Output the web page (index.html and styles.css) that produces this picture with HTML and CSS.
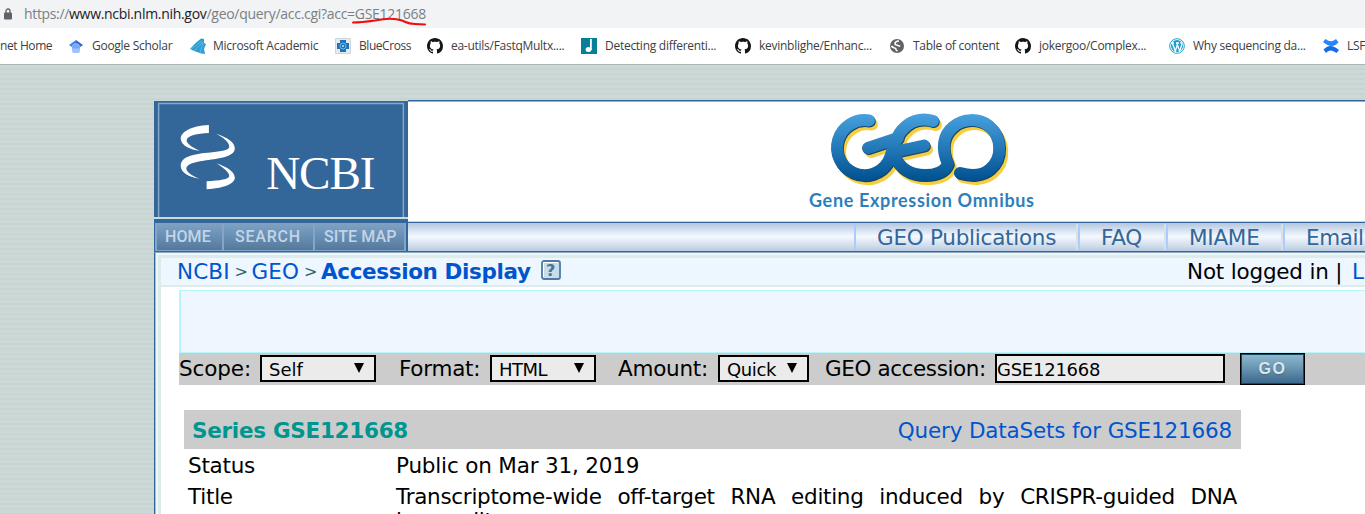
FILE: index.html
```
<!DOCTYPE html>
<html lang="en">
<head>
<meta charset="utf-8">
<title>GEO Accession viewer</title>
<link rel="stylesheet" href="styles.css">
</head>
<body>
<svg class="defs" width="0" height="0">
  <symbol id="github" viewBox="0 0 16 16"><path fill="#14171a" d="M8 0C3.58 0 0 3.58 0 8c0 3.54 2.29 6.53 5.47 7.59.4.07.55-.17.55-.38 0-.19-.01-.82-.01-1.49-2.01.37-2.53-.49-2.69-.94-.09-.23-.48-.94-.82-1.13-.28-.15-.68-.52-.01-.53.63-.01 1.08.58 1.23.82.72 1.21 1.87.87 2.33.66.07-.52.28-.87.51-1.07-1.78-.2-3.64-.89-3.64-3.95 0-.87.31-1.59.82-2.15-.08-.2-.36-1.02.08-2.12 0 0 .67-.21 2.2.82.64-.18 1.32-.27 2-.27s1.36.09 2 .27c1.53-1.04 2.2-.82 2.2-.82.44 1.1.16 1.92.08 2.12.51.56.82 1.27.82 2.15 0 3.07-1.87 3.75-3.65 3.95.29.25.54.73.54 1.48 0 1.07-.01 1.93-.01 2.2 0 .21.15.46.55.38A8.01 8.01 0 0 0 16 8c0-4.42-3.58-8-8-8z"/></symbol>
</svg>
<div class="address">
  <svg class="lock" width="8" height="12" viewBox="0 0 8 12"><path fill="none" stroke="#5f6368" stroke-width="1.3" d="M2 5V3a2 2 0 0 1 4 0v2"/><rect y="4.5" width="8" height="7" rx="1" fill="#5f6368"/></svg>
  <span class="url"><span>https://</span><span class="host">www.ncbi.nlm.nih.gov</span><span class="path">/geo/query/acc.cgi?acc=GSE121668</span></span>
  <svg class="scribble" width="78" height="10" viewBox="0 0 78 10"><path fill="none" stroke="#f00d10" stroke-width="2" stroke-linecap="round" d="M2 5.500C10 5.500 17 4.500 24 3.500C34 1.500 45 1.500 51 3.500C55 5 56 7 64 7L74 7.500"/></svg>
</div>
<div class="bookmarks">
  <a class="bm b0"><span>net Home</span></a>
  <a class="bm b1"><svg width="14" height="14" viewBox="0 0 14 14"><path fill="#4285f4" d="M7 1 0 6l7 5z"/><path fill="#356ac3" d="M7 1l7 5-7 5z"/><path fill="#a0c3ff" d="M3 7a4.3 4.3 0 0 1 8 0v4a4 4 0 0 1-8 0z"/><path fill="#76a7fa" d="M3 8a4.3 4.3 0 0 1 8 0v1.5H3z"/></svg><span>Google Scholar</span></a>
  <a class="bm b2"><svg width="16" height="16" viewBox="0 0 16 16"><path fill="#2d9fd4" d="M0 11 5 5.500 11 0.500l3 .5v4l2 1-2 5 1 5-4-.5L4 13z"/><path stroke="#8fd0ee" stroke-width=".5" fill="none" d="M1 11 12 3M4 13 13 4M10 15 13 5"/></svg><span>Microsoft Academic</span></a>
  <a class="bm b3"><svg width="16" height="16" viewBox="0 0 16 16"><path fill="#e7eaed" stroke="#cfd5da" d="M.5.5h15v15H.5z"/><path fill="#1774bd" d="M5 2h6v3h3v6h-3v3H5v-3H2V5h3z"/><circle cx="8" cy="8" r="3" fill="none" stroke="#8fc3e6" stroke-width=".8"/><circle cx="8" cy="8" r="1" fill="#c9e5f7"/></svg><span>BlueCross</span></a>
  <a class="bm b4"><svg width="16" height="16"><use href="#github"/></svg><span>ea-utils/FastqMultx....</span></a>
  <a class="bm b5"><svg width="16" height="16" viewBox="0 0 16 16"><path fill="#087f98" d="M0 0h16v16H0z"/><ellipse cx="7.500" cy="11.500" rx="2.900" ry="2.500" fill="#fff"/><path fill="#fff" d="M9 1h1.800v11H9z"/></svg><span>Detecting differenti...</span></a>
  <a class="bm b6"><svg width="16" height="16"><use href="#github"/></svg><span>kevinblighe/Enhanc...</span></a>
  <a class="bm b7"><svg width="14" height="14" viewBox="0 0 14 14"><circle cx="7" cy="7" r="7" fill="#5f6368"/><path fill="none" stroke="#fff" stroke-width="1.700" d="M9 2C6 2 5 3.500 5 5s4 1 5 2.500M1.500 7c1 2 3 1.500 4 2.500s0 2 2 2.500"/></svg><span>Table of content</span></a>
  <a class="bm b8"><svg width="16" height="16"><use href="#github"/></svg><span>jokergoo/Complex...</span></a>
  <a class="bm b9"><svg width="16" height="16" viewBox="0 0 16 16"><circle cx="8" cy="8" r="7.300" fill="#fff" stroke="#1e9fd0"/><circle cx="8" cy="8" r="6" fill="#1e9fd0"/><path fill="none" stroke="#fff" stroke-width="1.300" d="M2 5h3M7 5h3M3.300 5l3 8L8.300 7M7.700 5l3 8 2-6c.3-1-.9-2-1-3"/></svg><span>Why sequencing da...</span></a>
  <a class="bm b10"><svg width="16" height="14" viewBox="0 0 16 14"><path fill="#2684ff" d="M0 3 2.500 0c4 2.500 6 3.500 10.500 0l2.500 3.500C10 9 6 7.500 0 3z"/><path fill="#136bea" d="M16 11l-2.500 3C9 11 7 10.500 3 14L.5 10.500C6 5 10 6.500 16 11z"/></svg><span>LSF</span></a>
</div>
<div class="page">
  <div class="frame">
    <header class="header">
      <div class="ncbi">
        <svg class="ncbi-logo" width="254" height="118" viewBox="0 0 254 118">
          <path fill="#336699" d="M0 0h254v118H0z"/><path fill="none" stroke="#86a9c9" stroke-width="1.500" d="M2.500 118V2.500h249V118"/>
          <g fill="#fff" transform="translate(-15 -11) scale(.33333)">
            <path d="M206 106C150 108 120 128 120 148C120 168 150 182 178 185C150 172 138 162 138 152C140 140 170 132 206 131Z"/>
            <path d="M228 133C265 145 285 160 285 178C285 205 230 209 190 215C160 219 138 226 137 238C137 250 155 262 178 270C145 266 120 250 120 231C120 200 165 194 210 190C245 186 268 184 268 172C268 158 250 145 228 133Z"/>
            <path d="M228 223C265 235 285 250 285 268C285 285 250 300 199 302V278C240 276 268 272 268 262C268 250 250 236 228 223Z"/>
          </g>
          <text x="112" y="89.500" textLength="111" class="ncbi-word">NCBI</text>
        </svg>
        <nav class="ncbi-nav"><a class="n1">HOME</a><a class="n2">SEARCH</a><a class="n3">SITE MAP</a></nav>
      </div>
      <div class="banner">
        <div class="geo">
          <svg width="230" height="100" viewBox="805 110 230 100">
            <defs>
              <linearGradient id="gb" gradientUnits="userSpaceOnUse" x1="0" y1="114" x2="0" y2="181"><stop offset="0" stop-color="#48a0de"/><stop offset=".5" stop-color="#2479b8"/><stop offset="1" stop-color="#00508f"/></linearGradient>
              <g id="geo-shape" fill="none" stroke-width="12" stroke-linecap="round" stroke-linejoin="round">
                <path d="M869 120.500A27.500 27.500 0 1 0 888 162C894 150 894 139 902 130C909 122 920 117 933 121"/>
                <path d="M894 155C899 168 910 175 925 175C937 175 945 171 948 164C941 149 943 135 953 127C963 118 979 118 989 126C1002 137 1003 158 990 169C982 176 970 176 960 173"/>
                <path d="M868 148 898 138M899 151 924 145.500"/>
              </g>
            </defs>
            <use href="#geo-shape" stroke="#f7ce3d" x="3" y="4"/>
            <use href="#geo-shape" stroke="#174264" x=".8" y="1"/>
            <use href="#geo-shape" stroke="url(#gb)"/>
            <text x="809" y="206.500" textLength="225" class="geo-word">Gene Expression Omnibus</text>
          </svg>
        </div>
        <nav class="geo-nav"><a class="g1">GEO Publications</a><a class="g2">FAQ</a><a class="g3">MIAME</a><a class="g4">Email</a></nav>
      </div>
    </header>
    <main class="content">
      <div class="crumbs">
        <div class="trail"><a>NCBI</a><i>&gt;</i><a>GEO</a><i>&gt;</i><b>Accession Display</b>
          <svg class="help" width="20" height="20" viewBox="0 0 20 20"><rect x="1" y="1" width="18" height="18" rx="2" fill="#c9dcec" stroke="#4f7ba1" stroke-width="1.800"/><path fill="none" stroke="#fff" d="M2.500 17V2.500H17"/><text x="5" y="15.500" class="help-mark">?</text></svg>
        </div>
        <div class="login">Not logged in | <a>L</a></div>
      </div>
      <div class="notice"></div>
      <form class="query">
        <label class="q1">Scope:</label><span class="select s1">Self<em></em></span>
        <label class="q2">Format:</label><span class="select s2">HTML<em></em></span>
        <label class="q3">Amount:</label><span class="select s3">Quick<em></em></span>
        <label class="q4">GEO accession:</label><span class="field">GSE121668</span>
        <span class="go">GO</span>
      </form>
      <section class="record">
        <div class="series"><b>Series GSE121668</b><a>Query DataSets for GSE121668</a></div>
        <dl>
          <dt>Status</dt><dd>Public on Mar 31, 2019</dd>
          <dt>Title</dt><dd class="title">Transcriptome-wide off-target RNA editing induced by CRISPR-guided DNA <span class="tail">base editors</span></dd>
        </dl>
      </section>
    </main>
  </div>
</div>
</body>
</html>
```
FILE: styles.css
```
* { box-sizing: border-box; }
body { margin: 0; width: 1365px; height: 514px; overflow: hidden; background: #fff; color: #000; font: 21.5px/28px "DejaVu Sans", Verdana, sans-serif; letter-spacing: -.25px; }
.defs { display: none; }
a { color: #0055cc; }
svg { display: block; flex: none; }

.address { position: relative; height: 28px; padding-left: 4px; display: flex; align-items: center; gap: 12px; background: #f1f3f4; font: 14px/20px "Open Sans", "Noto Sans", sans-serif; letter-spacing: -.34px; color: #7b7f84; white-space: nowrap; }
.host { color: #202124; letter-spacing: -.3px; }
.path { letter-spacing: -.29px; }
.scribble { position: absolute; left: 351px; top: 17px; }

.bookmarks { height: 37px; padding-bottom: 1px; display: flex; align-items: center; background: #fff; border-bottom: 1px solid #aeb4b4; font: 12px/16px "Open Sans", "Noto Sans", sans-serif; letter-spacing: -.27px; overflow: hidden; }
.bm { flex: none; display: flex; align-items: center; gap: 8px; color: #3c4043; white-space: nowrap; }
.bm span { padding-top: 1px; }
.b0 { width: 69px; letter-spacing: -.4px; }
.b1 { width: 121px; gap: 9px; }
.b2 { width: 145px; gap: 7px; }
.b3 { width: 92px; letter-spacing: -.44px; }
.b4 { width: 154px; }
.b5 { width: 154px; }
.b6 { width: 155px; }
.b7 { width: 125px; gap: 9px; }
.b8 { width: 154px; }
.b9 { width: 154px; }

.page { height: 449px; padding: 35px 0 0 154px; background: repeating-linear-gradient(#ccd9d6 0 3px, #c8d4d1 3px 5px); overflow: hidden; }
.header { display: flex; height: 152px; }
.ncbi { width: 254px; margin-top: 1px; flex: none; background: #336699; }
.ncbi-logo { height: 116px; }
.ncbi-word { font: 48px "Liberation Serif", serif; fill: #fff; letter-spacing: 0; }
.ncbi-nav { height: 35px; border-top: 2px solid #ced9de; padding: 4px 2px 0 1px; display: flex; }
.ncbi-nav a { height: 28px; padding-left: 8px; font: 500 16px/28px Roboto, sans-serif; color: #c2d5e7; background: linear-gradient(#80a2c3, #688fb5 50%, #557999); border: solid #83a6c8; border-width: 0 0 1px 2px; white-space: pre; }
.n1 { width: 67px; letter-spacing: .1px; }
.ncbi-nav .n2 { width: 91px; padding-left: 11px; letter-spacing: .8px; }
.ncbi-nav .n3 { width: 93px; padding-left: 9px; border-right-width: 2px; letter-spacing: .1px; }
.banner { flex: 1; min-width: 0; background: #fff; border-top: 1px solid #336699; box-shadow: inset 0 1px #8aaed0; }
.geo { height: 120px; padding: 9px 0 0 397px; }
.geo-word { font: bold 18px Lato, sans-serif; fill: #2d7fbb; letter-spacing: 0; }
.geo-nav { height: 31px; display: flex; padding: 2px 0 0 446px; border-top: 1px solid #c7d1da; border-bottom: 1px solid #336699; background: linear-gradient(#336699 0 1px, #b4c7df 1px, #f4f9ff 50%, #bacce0); overflow: hidden; white-space: nowrap; }
.geo-nav a { height: 26px; flex: none; line-height: 27px; color: #336699; border-left: 2px solid #aaccff; padding-left: 21px; }
.g1 { width: 222px; }
.g2, .g3, .g4 { box-shadow: -2px 0 #dddfe4; }
.g2 { margin-left: 2px; width: 86px; }
.g3 { margin-left: 2px; width: 115px; }
.g4 { margin-left: 2px; width: 120px; letter-spacing: -.4px; }

.content { height: 270px; border-left: 1px solid #336699; border-top: 1px solid #8baaca; background: linear-gradient(90deg, #a2bdd4 0 1px, #f0f7f7 1px 3px, #deebeb 3px 6px, #fff 6px); }
.crumbs { height: 34px; margin-left: 3px; border-top: 2px solid #f0f7f7; display: flex; align-items: center; justify-content: space-between; background: linear-gradient(#deebeb 0 3px, #eef6ff 3px 30px, #deebeb 30px); box-shadow: inset 3px 0 #deebeb; padding: 2px 0 0 19px; white-space: nowrap; }
.trail { display: flex; align-items: center; }
.trail i { width: 22px; padding-left: 5px; font-style: normal; font-size: 16px; color: #336666; letter-spacing: 0; }
.trail a { letter-spacing: .1px; }
.trail b { color: #0055cc; letter-spacing: -.37px; }
.help { margin-left: 10px; margin-top: -5px; }
.help-mark { font: bold 16px "DejaVu Sans", sans-serif; fill: #4a7397; letter-spacing: 0; }
.login { width: 178px; flex: none; letter-spacing: -.2px; }
.login a { margin-left: 3px; }
.notice { height: 63px; margin: 3px 0 0 24px; border: 1px solid #b9f6fa; border-left-width: 2px; border-right: 0; background: #eef6ff; }
.query { height: 32px; margin: 0 0 0 24px; display: flex; align-items: center; background: #ccc; white-space: nowrap; font-size: 21.5px; }
.query label { flex: none; margin-top: -1px; }
.query .q1 { width: 81px; letter-spacing: -.1px; }
.q2 { width: 114px; padding-left: 23px; }
.q3 { width: 122px; padding-left: 22px; }
.q4 { width: 186px; padding-left: 16px; letter-spacing: -.4px; }
.select, .field { flex: none; height: 27px; border: 2px solid #000; background: #ebebeb; padding-left: 7px; font-size: 18px; line-height: 26px; display: flex; justify-content: space-between; margin-top: -1px; }
.select em { width: 10px; height: 10px; margin: 6px 10px 0 0; background: #000; clip-path: polygon(0 0, 100% 0, 50% 100%); }
.s1 { width: 116px; letter-spacing: 0; }
.s2 { width: 106px; letter-spacing: -.5px; }
.s3 { width: 91px; letter-spacing: -.38px; }
.field { width: 230px; height: 29px; line-height: 27px; padding-left: 0; }
.go { flex: none; width: 65px; height: 32px; margin-left: 15px; border: 1px solid #000; box-shadow: inset 0 0 0 1px #20445e; background: linear-gradient(#91bad0, #6593af 50%, #3a668b); color: #d9e6ee; font: bold 16px/30px "Liberation Sans", sans-serif; letter-spacing: 1.5px; text-align: center; text-shadow: 0 1px 1px #49687d; }

.record { width: 1057px; margin: 25px 0 0 29px; }
.series { height: 39px; display: flex; justify-content: space-between; align-items: center; background: #ccc; padding: 3px 9px 0 8px; }
.series b { color: #009690; letter-spacing: -.28px; }
.series a { letter-spacing: -.18px; }
dl { display: grid; grid-template-columns: 208px 841px; margin: 2px 0 0 4px; row-gap: 1px; line-height: 30px; }
dd { margin: 0; letter-spacing: -.18px; line-height: 30px; }
.title { padding-top: 3px; line-height: 24px; text-align: justify; letter-spacing: -.3px; }
.tail { white-space: nowrap; }
dt { letter-spacing: -.25px; }
```
